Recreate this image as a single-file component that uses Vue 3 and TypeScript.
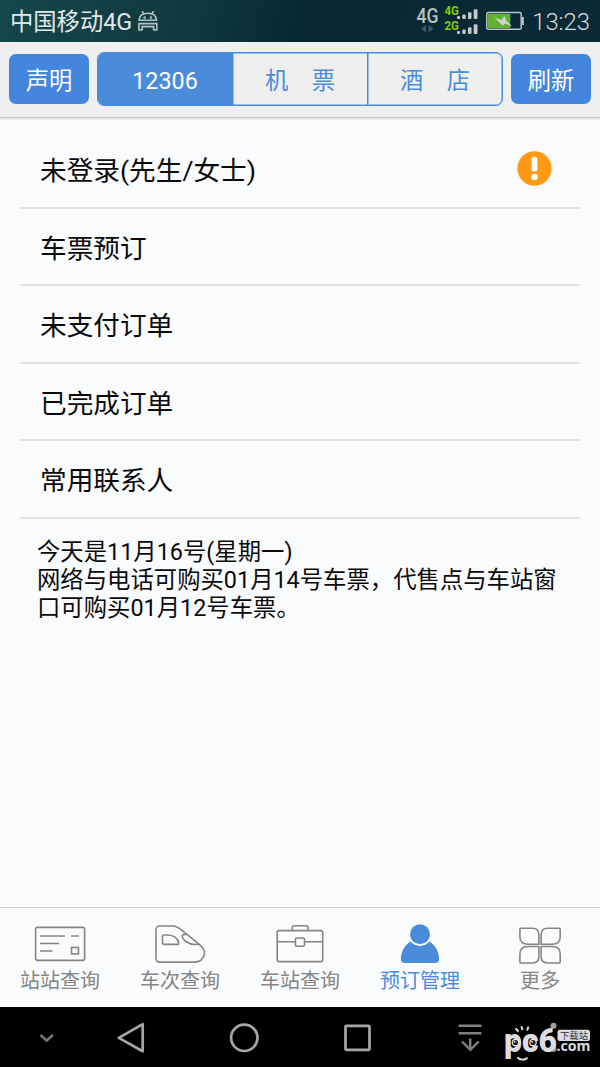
<script setup lang="ts">
import { ref } from 'vue'

type IconName = 'ticket' | 'train' | 'station' | 'user' | 'more'

interface NavItem {
  label: string
  icon: IconName
}

const segments: string[] = ['12306', '机　票', '酒　店']
const activeSegment = ref(0)

const rows: string[] = ['未登录(先生/女士)', '车票预订', '未支付订单', '已完成订单', '常用联系人']

const notice: string[] = [
  '今天是11月16号(星期一)',
  '网络与电话可购买01月14号车票，代售点与车站窗',
  '口可购买01月12号车票。',
]

const navItems: NavItem[] = [
  { label: '站站查询', icon: 'ticket' },
  { label: '车次查询', icon: 'train' },
  { label: '车站查询', icon: 'station' },
  { label: '预订管理', icon: 'user' },
  { label: '更多', icon: 'more' },
]
const activeNav = ref(3)
</script>

<template>
  <div class="screen">
    <div class="status">
      <span class="carrier">中国移动4G</span>
      <svg class="droid" width="22" height="22" viewBox="0 0 22 22" fill="none" stroke="#b6c3c5" stroke-width="1.600">
        <path d="M2.200 10.300C2.200 5.800 5.500 3.200 10.800 3.200s8.600 2.600 8.600 7.100z" />
        <path d="M5 1.300l2 2.800M16.600 1.300l-2 2.800M2 20.200V13.600h17.800v6.600M5.200 20.200v-3.600h11.400v3.600M1.300 20h4.200M16.300 20h4.200" />
        <circle cx="7.600" cy="7.600" r=".5" />
        <circle cx="14" cy="7.600" r=".5" />
      </svg>
      <svg class="signal" width="110" height="41" viewBox="0 0 110 41">
        <text class="net-main" x="1.500" y="22.500" textLength="22" lengthAdjust="spacingAndGlyphs">4G</text>
        <path d="M11 25v7.600l-5-3.800zM13.500 25v7.600l5-3.800z" fill="#45585e" />
        <text class="net-sub" x="29.500" y="15" textLength="14.500" lengthAdjust="spacingAndGlyphs">4G</text>
        <text class="net-sub" x="29.500" y="29.500" textLength="14.500" lengthAdjust="spacingAndGlyphs">2G</text>
        <g fill="#c3cbcd">
          <rect x="42" y="16" width="3" height="3" rx="1" />
          <rect x="47.300" y="14.500" width="3.400" height="4.500" rx="1" />
          <rect x="53" y="12.300" width="3.500" height="6.700" rx="1" />
          <rect x="58.700" y="9.300" width="3.800" height="9.700" rx="1" />
          <rect x="42" y="31" width="3" height="3" rx="1" />
          <rect x="47.300" y="29.500" width="3.400" height="4.500" rx="1" />
          <rect x="53" y="27.300" width="3.500" height="6.700" rx="1" />
          <rect x="58.700" y="24.300" width="3.800" height="9.700" rx="1" />
        </g>
        <rect x="71.800" y="12.600" width="34.400" height="16.600" rx="1.500" fill="none" stroke="#bcc5c7" stroke-width="1.500" />
        <rect x="107" y="17" width="1.800" height="8" fill="#bcc5c7" />
        <rect x="73" y="13.800" width="22.300" height="14.200" fill="#62b232" />
        <path d="M79.500 17.500l7 2.500 3-4 2 5 5.500 5.500-6.500-3-3 2z" fill="#cdd6d0" />
      </svg>
      <span class="clock">13:23</span>
    </div>

    <header class="toolbar">
      <button class="btn">声明</button>
      <div class="segmented">
        <button
          v-for="(s, i) in segments"
          :key="s"
          class="segment"
          :class="{ active: i === activeSegment }"
          @click="activeSegment = i"
        >{{ s }}</button>
      </div>
      <button class="btn">刷新</button>
    </header>

    <main class="content">
      <ul class="list">
        <li v-for="(row, i) in rows" :key="row" class="row">
          <span>{{ row }}</span>
          <svg v-if="i === 0" width="35" height="35" viewBox="0 0 35 35">
            <circle cx="17.500" cy="17.500" r="17.200" fill="#ff9a17" />
            <rect x="14.600" y="5.800" width="5.800" height="14.800" rx="2.900" fill="#fff" />
            <circle cx="17.500" cy="25.900" r="3.200" fill="#fff" />
          </svg>
        </li>
      </ul>
      <p class="notice">
        <span v-for="line in notice" :key="line">{{ line }}</span>
      </p>
    </main>

    <nav class="tabs">
      <div
        v-for="(item, i) in navItems"
        :key="item.label"
        class="tab"
        :class="{ active: i === activeNav }"
        @click="activeNav = i"
      >
        <svg width="60" height="44" viewBox="0 0 60 44" fill="none" stroke="currentColor" stroke-width="1.600">
          <g v-if="item.icon === 'ticket'">
            <rect x="5.600" y="7.400" width="49" height="33" rx="1.800" />
            <path d="M10 16h25M41 16h8M10 23.500h19M10 31h12.500" />
            <rect x="41.500" y="27.500" width="7" height="6.400" />
          </g>
          <g v-else-if="item.icon === 'train'">
            <path d="M9.500 6h13.200c4.300 0 7.200 2.600 10.500 5.300l15.500 12.500c4 3.200 6.800 7 5.600 11-1.200 4.300-4.800 7.300-9.800 7.300h-35a3.500 3.500 0 0 1-3.500-3.500V9.500A3.500 3.500 0 0 1 9.500 6z" />
            <path d="M14 15h3.500c6.500 0 10.800 3.600 11.300 8.200.1.800-.3 1.200-1 1.200H14.500c-1.200 0-2-.8-2-2v-5.900c0-.9.600-1.500 1.500-1.500z" />
            <path d="M36.500 14.500c-2-.3-3.800-.2-4.200 1-.8 4 6.500 9 12.500 9 2 0 3.500 0 4.700-.4" />
          </g>
          <g v-else-if="item.icon === 'station'">
            <rect x="7.200" y="10.600" width="45.500" height="31" rx="1.800" />
            <path d="M22.300 10.600V7.300c0-1 .6-1.600 1.600-1.600h12.400c1 0 1.600.6 1.600 1.600v3.300M7.200 21.800h18.200M34.500 21.800h18.200" />
            <rect x="25.400" y="18" width="9.100" height="8.300" rx="1.500" />
          </g>
          <g v-else-if="item.icon === 'user'" fill="currentColor" stroke="none">
            <circle cx="30" cy="14.300" r="10" />
            <path d="M20.600 21.500c2.200 2.700 5.600 4.400 9.400 4.400s7.200-1.700 9.400-4.400c6 3.400 9.700 10.500 9.700 17.700 0 2.300-1.500 3.700-3.800 3.700H14.700c-2.300 0-3.800-1.400-3.800-3.700 0-7.200 3.700-14.300 9.700-17.700z" />
          </g>
          <g v-else>
            <path d="M11 8.200h11.500c4 0 6.400 2.300 6.400 6.200v9.800H17.800c-5 0-7.900-2.900-7.900-7.500V9.300c0-.7.400-1.100 1.100-1.100z" />
            <path d="M49.100 8.200H37.600c-4 0-6.400 2.300-6.400 6.200v9.800h11.100c5 0 7.900-2.900 7.900-7.500V9.300c0-.7-.4-1.100-1.100-1.100z" />
            <path d="M11 43H22.500c4 0 6.400-2.300 6.400-6.200V26.500H17.800c-5 0-7.900 2.900-7.900 7.500v7.900c0 .7.400 1.100 1.100 1.100z" />
            <path d="M49.100 43H37.600c-4 0-6.400-2.300-6.400-6.200V26.500h11.100c5 0 7.900 2.900 7.900 7.500v7.900c0 .7-.4 1.100-1.100 1.100z" />
          </g>
        </svg>
        <span class="tab-label">{{ item.label }}</span>
      </div>
    </nav>

    <footer class="system">
      <svg width="600" height="60" viewBox="0 0 600 60" fill="none" stroke="#a6a6a6" stroke-width="2.700">
        <path d="M40.500 28l6.200 5.500L53 28" stroke="#777" stroke-width="2.500" />
        <path d="M142.700 17.200v27L118.800 30.900z" stroke-linejoin="round" />
        <circle cx="244.300" cy="30.800" r="13.200" />
        <rect x="345.500" y="18.800" width="24" height="24" rx=".8" />
        <path d="M458.500 18.800h23M458.500 26.300h23M470.200 31.500v11.500M462 34.500l8.300 8.300 8.500-8.300" stroke="#808080" stroke-width="2.400" />
        <circle cx="553.500" cy="18.800" r="3" fill="#a0a0a0" stroke="none" />
        <circle cx="553.500" cy="42" r="3" fill="#909090" stroke="none" />
        <g stroke="none" fill="#dcdce2">
          <text class="mark" x="504" y="44.500" textLength="53" lengthAdjust="spacingAndGlyphs">pc6</text>
          <text class="domain" x="556.500" y="44.300" textLength="34" lengthAdjust="spacingAndGlyphs">.com</text>
          <rect x="557.500" y="22.800" width="32.500" height="11.200" rx="2.500" />
          <text class="tag" x="560" y="31.900" textLength="28" lengthAdjust="spacingAndGlyphs">下载站</text>
        </g>
        <g stroke="#dcdce2" stroke-width="2">
          <path d="M518.500 24.500l-3-3M522.500 23l-1-3.800M527 23.500l1.500-3.800" />
          <path d="M517.500 50.500c2.500 2.800 7 2.800 10 .2" />
        </g>
        <g stroke="none">
          <circle cx="515.500" cy="35.500" r="3.800" fill="#e8e8ec" />
          <circle cx="515.500" cy="35.500" r="2.600" fill="#222" />
          <circle cx="514.700" cy="34.800" r=".9" fill="#eee" />
          <circle cx="533" cy="35.500" r="3.800" fill="#e8e8ec" />
          <circle cx="533" cy="35.500" r="2.600" fill="#222" />
          <circle cx="532.200" cy="34.800" r=".9" fill="#eee" />
        </g>
      </svg>
    </footer>
  </div>
</template>

<style>
body {
  margin: 0;
}
</style>

<style scoped>
.screen {
  display: flex;
  flex-direction: column;
  width: 600px;
  height: 1067px;
  overflow: hidden;
  background: #fafbfd;
  color: #0a0a0a;
  font-family: Roboto, "Noto Sans CJK SC", sans-serif;
}

.status {
  display: flex;
  align-items: center;
  flex: none;
  box-sizing: border-box;
  height: 41.500px;
  padding: 0 10px;
  background: linear-gradient(105deg, #14474b 0%, #10393f 32%, #072831 50%, #0a2a35 100%);
}

.carrier {
  padding-top: 2px;
  font-size: 23.300px;
  line-height: 40px;
  color: #e3e9ea;
}

.droid {
  margin-left: 5px;
}

.signal {
  margin-left: auto;
}

.net-main {
  font-size: 20px;
  font-weight: 500;
  fill: #b9c3c6;
}

.net-sub {
  font-size: 12px;
  font-weight: 700;
  fill: #84cc12;
}

.clock {
  margin-left: 7px;
  padding-top: 2px;
  font-size: 23.800px;
  font-weight: 300;
  line-height: 40px;
  color: #d6dcde;
}

.toolbar {
  display: flex;
  align-items: center;
  gap: 8px;
  flex: none;
  box-sizing: border-box;
  height: 76px;
  padding: 0 9px;
  border-bottom: 1px solid #c8c8c8;
  background: #efefef;
  box-shadow: 0 1px 2px rgba(0, 0, 0, 0.16);
}

.btn,
.segment {
  padding: 0;
  border: 0;
  font-family: inherit;
  font-size: 23.300px;
}

.btn {
  width: 80px;
  height: 50px;
  border-radius: 7px;
  background: #4485de;
  color: #fff;
}

.segmented {
  display: flex;
  box-sizing: border-box;
  width: 406px;
  height: 54px;
  overflow: hidden;
  border: 1px solid #4b8cda;
  border-radius: 7px;
  box-shadow: inset 0 0 0 0.500px #4b8cda;
}

.segment {
  flex: 1;
  background: transparent;
  color: #4b8cda;
}

.segment + .segment {
  border-left: 1px solid #4b8cda;
  box-shadow: inset 0.500px 0 0 #4b8cda;
}

.segment.active {
  padding-top: 3px;
  background: #4b8cda;
  color: #fff;
}

.content {
  flex: 1;
  padding: 13.500px 20px 0;
}

.list {
  margin: 0;
  padding: 0;
  list-style: none;
}

.row {
  display: flex;
  align-items: center;
  justify-content: space-between;
  box-sizing: border-box;
  height: 77.550px;
  padding: 0 28px 0 20px;
  border-bottom: 2px solid #e1e2e3;
  font-size: 26.670px;
}

.notice {
  display: flex;
  flex-direction: column;
  margin: 20.500px 0 0 17px;
  font-size: 23.370px;
  line-height: 27.700px;
  white-space: nowrap;
}

.tabs {
  display: flex;
  flex: none;
  box-sizing: border-box;
  height: 100px;
  border-top: 1px solid #d5d6d8;
}

.tab {
  display: flex;
  flex: 1;
  flex-direction: column;
  align-items: center;
  padding-top: 12px;
  color: #858585;
}

.tab.active {
  color: #4b8cda;
}

.tab-label {
  margin-top: 2px;
  font-size: 20px;
  line-height: 30px;
}

.system {
  flex: none;
  height: 60px;
  background: #000;
}

.mark {
  font-size: 33px;
  font-weight: 900;
}

.domain {
  font-family: "Open Sans", sans-serif;
  font-size: 14px;
  font-weight: 700;
}

.tag {
  fill: #333;
  font-family: "Noto Sans CJK SC", sans-serif;
  font-size: 9px;
}
</style>
